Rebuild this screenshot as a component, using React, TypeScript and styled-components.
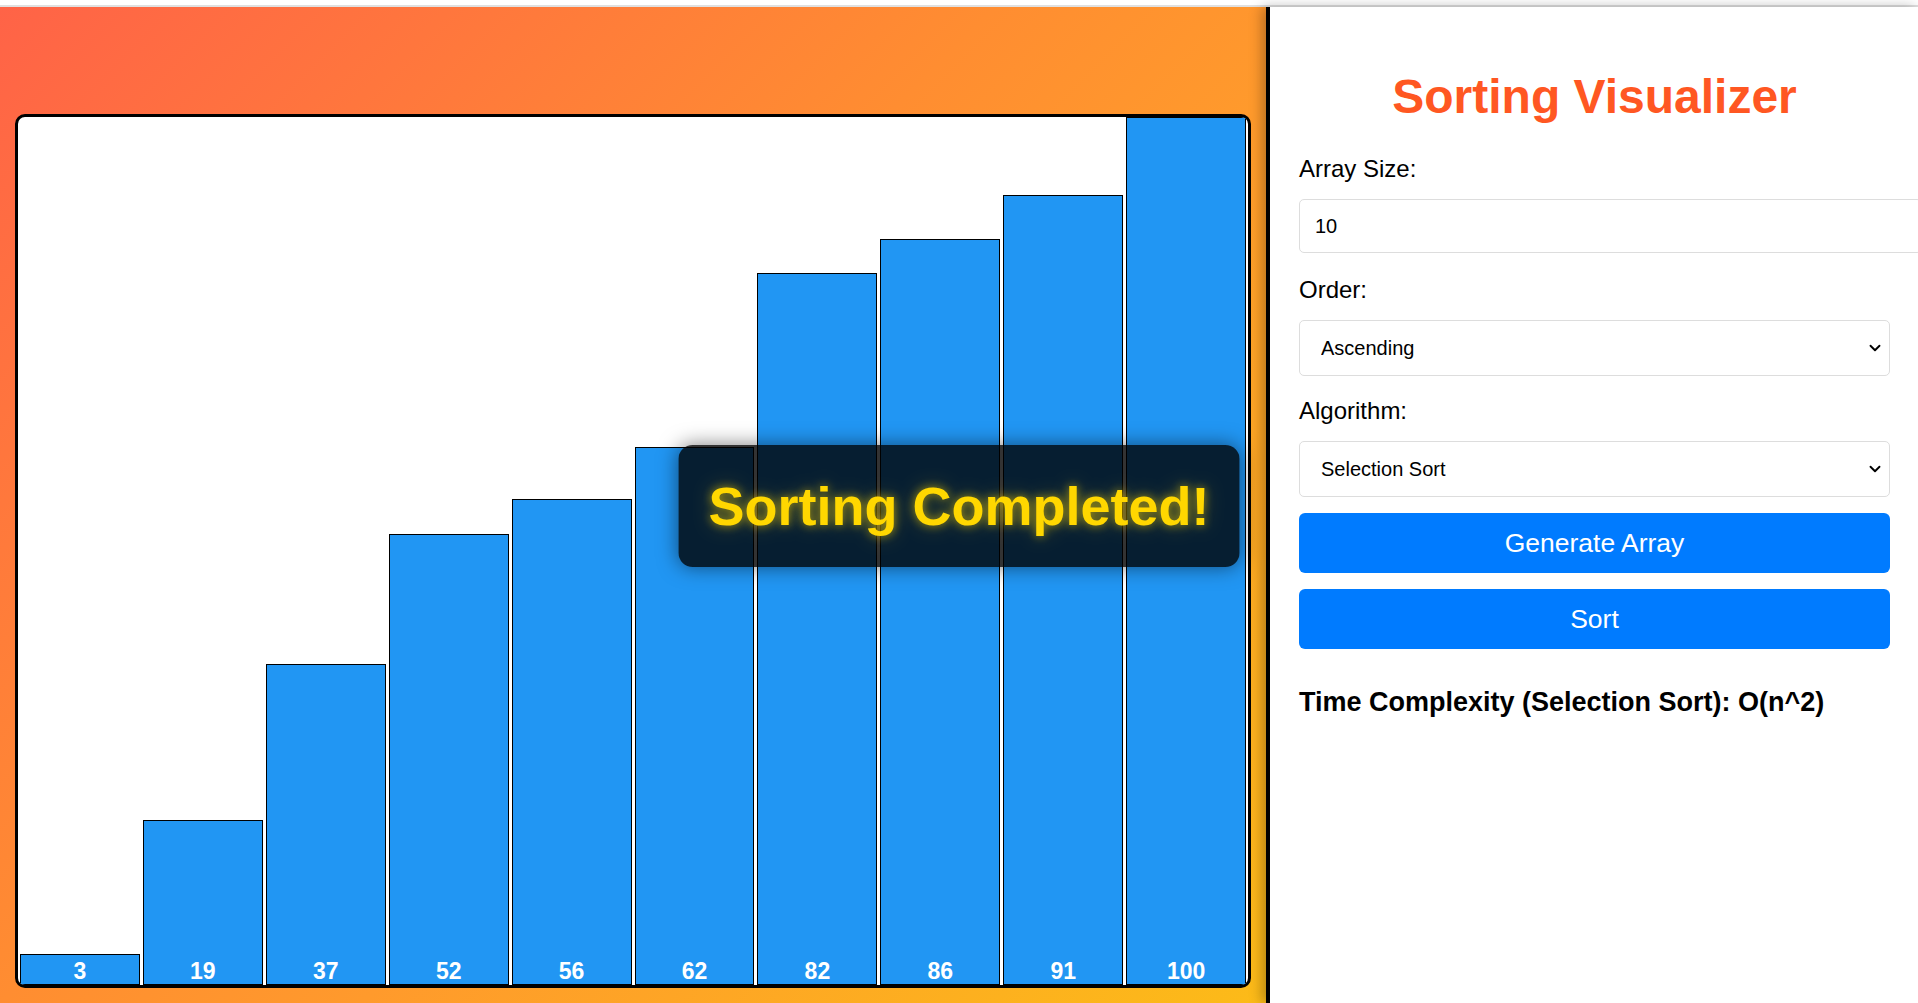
import React from "react";
import styled, { createGlobalStyle } from "styled-components";
import { ChevronDown } from "lucide-react";

const GlobalStyle = createGlobalStyle`
  html, body {
    margin: 0;
    padding: 0;
    height: 100%;
  }
  body {
    font-family: "Liberation Sans", Arial, sans-serif;
    background: #fff;
    overflow: hidden;
  }
  * { box-sizing: border-box; }
`;

const TopStrip = styled.div`
  height: 7px;
  background: #fff;
  border-bottom: 2px solid #e0e0e0;
`;

const Layout = styled.div`
  display: flex;
  height: calc(100vh - 7px);
`;

const VisualPanel = styled.section`
  flex: 1;
  display: flex;
  padding: 107px 15px 15px;
  background: linear-gradient(135deg, #ff6347 0%, #ff8d31 44%, #ff9a2c 60%, #fcbb18 100%);
`;

const Chart = styled.div`
  flex: 1;
  display: flex;
  align-items: flex-end;
  gap: 3px;
  padding: 0 2px;
  background: #fff;
  border: 3px solid #000;
  border-radius: 10px;
  overflow: hidden;
`;

const Bar = styled.div`
  flex: 1;
  min-height: 31px;
  display: flex;
  align-items: flex-end;
  justify-content: center;
  background: #2196f3;
  border: 1px solid #000;
  color: #fff;
  font-weight: bold;
  font-size: 23px;
  line-height: 26px;
`;

const ControlPanel = styled.aside`
  position: relative;
  width: 652px;
  flex-shrink: 0;
  padding: 62px 28px 0 29px;
  background: #fff;
  border-left: 4px solid #000;
  box-shadow: -4px 0 12px rgba(0, 0, 0, 0.28);
`;

const Title = styled.h1`
  margin: 0 0 31px;
  font-size: 48px;
  line-height: 55px;
  font-weight: bold;
  color: #ff5722;
  text-align: center;
`;

const Label = styled.label`
  display: block;
  font-size: 24px;
  line-height: 28px;
  margin-bottom: 16px;
  color: #000;
`;

const NumberInput = styled.input`
  display: block;
  box-sizing: content-box;
  width: 100%;
  padding: 15px;
  font-family: inherit;
  font-size: 20px;
  line-height: 22px;
  color: #000;
  border: 1px solid #ddd;
  border-radius: 5px;
  margin: 0 0 23px;
  outline: none;
`;

const SelectWrap = styled.div<{ $gap: number }>`
  position: relative;
  margin-bottom: ${(p) => p.$gap}px;
`;

const Select = styled.select`
  display: block;
  width: 100%;
  height: 56px;
  padding: 0 40px 0 21px;
  font-family: inherit;
  font-size: 20px;
  color: #000;
  background-color: #fff;
  border: 1px solid #ddd;
  border-radius: 5px;
  appearance: none;
  -webkit-appearance: none;
  outline: none;
`;

const Chevron = styled(ChevronDown)`
  position: absolute;
  right: 6px;
  top: 50%;
  transform: translateY(-50%);
  pointer-events: none;
  color: #000;
`;

const ActionButton = styled.button`
  display: block;
  width: 100%;
  height: 60px;
  margin: 0 0 16px;
  border: none;
  border-radius: 6px;
  background: #007bff;
  color: #fff;
  font-family: inherit;
  font-size: 26.5px;
  cursor: pointer;
`;

const Complexity = styled.h3`
  margin: 38px 0 0;
  font-size: 27px;
  line-height: 31px;
  font-weight: bold;
  color: #000;
`;

const Toast = styled.div`
  position: fixed;
  top: calc(50% + 4px);
  left: 50%;
  transform: translate(-50%, -50%);
  padding: 30px;
  background: rgba(0, 0, 0, 0.8);
  border-radius: 14px;
  box-shadow: 0 0 20px rgba(0, 0, 0, 0.5);
  color: #ffd700;
  font-size: 54px;
  line-height: 62px;
  font-weight: bold;
  white-space: nowrap;
  text-shadow: 0 0 10px rgba(255, 215, 0, 0.6), 0 0 20px rgba(255, 215, 0, 0.3);
`;

const values = [3, 19, 37, 52, 56, 62, 82, 86, 91, 100];

export default function App() {
  return (
    <>
      <GlobalStyle />
      <TopStrip />
      <Layout>
        <VisualPanel>
          <Chart>
            {values.map((v) => (
              <Bar key={v} style={{ height: `${v}%` }}>
                {v}
              </Bar>
            ))}
          </Chart>
        </VisualPanel>
        <ControlPanel>
          <Title>Sorting Visualizer</Title>
          <Label htmlFor="size">Array Size:</Label>
          <NumberInput id="size" type="number" defaultValue={10} />
          <Label htmlFor="order">Order:</Label>
          <SelectWrap $gap={21}>
            <Select id="order" defaultValue="asc">
              <option value="asc">Ascending</option>
              <option value="desc">Descending</option>
            </Select>
            <Chevron size={18} strokeWidth={2.5} />
          </SelectWrap>
          <Label htmlFor="algo">Algorithm:</Label>
          <SelectWrap $gap={16}>
            <Select id="algo" defaultValue="selection">
              <option value="bubble">Bubble Sort</option>
              <option value="selection">Selection Sort</option>
              <option value="insertion">Insertion Sort</option>
              <option value="merge">Merge Sort</option>
              <option value="quick">Quick Sort</option>
            </Select>
            <Chevron size={18} strokeWidth={2.5} />
          </SelectWrap>
          <ActionButton>Generate Array</ActionButton>
          <ActionButton>Sort</ActionButton>
          <Complexity>Time Complexity (Selection Sort): O(n^2)</Complexity>
        </ControlPanel>
      </Layout>
      <Toast>Sorting Completed!</Toast>
    </>
  );
}
